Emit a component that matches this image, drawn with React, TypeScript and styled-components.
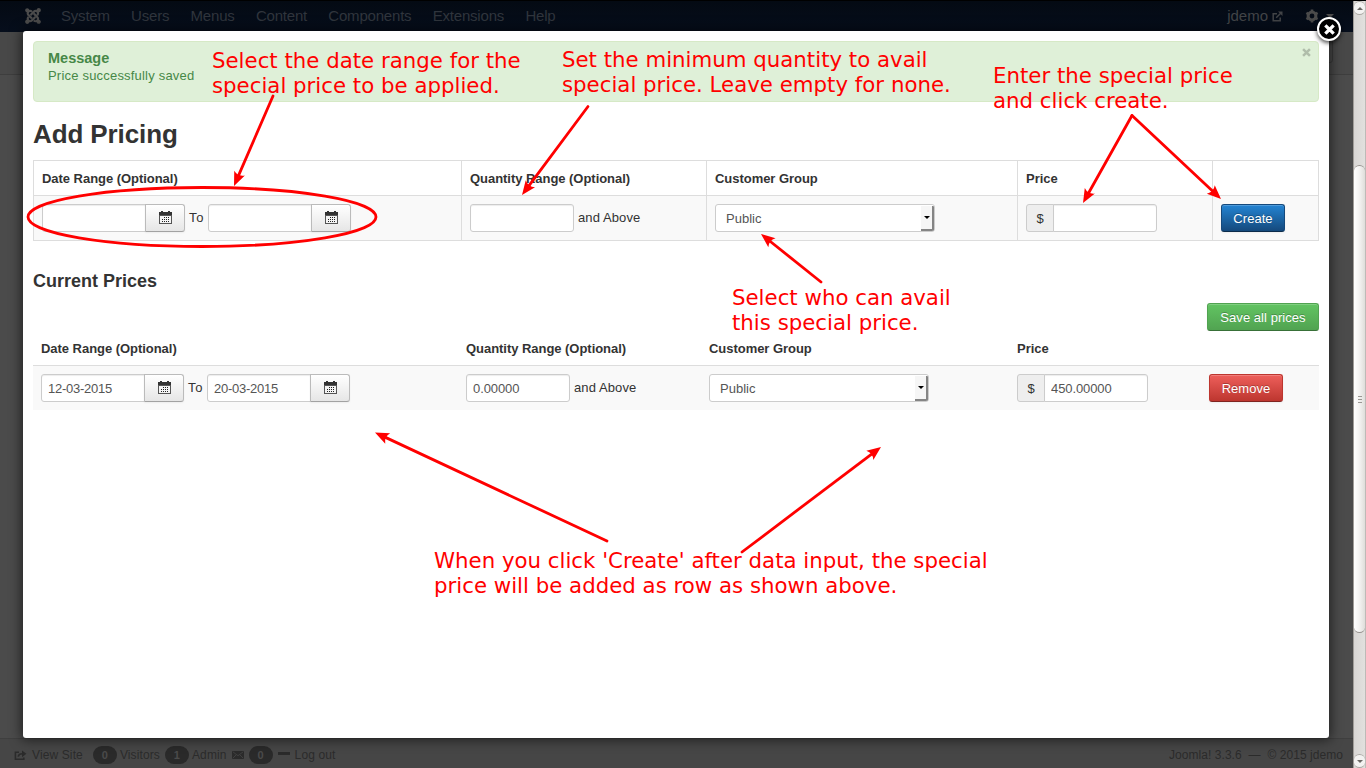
import React from "react";
import styled, { createGlobalStyle } from "styled-components";
import { FaJoomla } from "react-icons/fa";

const GlobalStyle = createGlobalStyle`
  *, *::before, *::after { box-sizing: border-box; }
  body {
    margin: 0;
    overflow: hidden;
    font: 13px/18px "Liberation Sans", Arial, sans-serif;
    color: #333;
  }
`;

const Screen = styled.div`
  position: relative;
  display: flex;
  width: 1366px;
  height: 768px;
  border-top: 1px solid #000;
  overflow: hidden;
`;

const Backdrop = styled.div`
  display: flex;
  flex-direction: column;
  width: 1353px;
  background: #4b4b4b;
`;

const Navbar = styled.nav`
  display: flex;
  align-items: center;
  height: 31px;
  padding: 0 19px 1px 24px;
  background: linear-gradient(#040a13, #060e1c);
  color: #30353d;
  font-size: 15px;
`;

const NavLogo = styled(FaJoomla)`
  width: 18px;
  height: 18px;
  margin-right: 19px;
  color: #4b4b4b;
`;

const NavItems = styled.div`
  display: flex;
  flex: 1;
  gap: 21.3px;
  letter-spacing: -0.2px;
`;

const NavUser = styled.div`
  display: flex;
  align-items: center;
  gap: 4px;
  color: #424447;
`;

const GearSlot = styled.span`
  display: flex;
  align-items: center;
  gap: 7px;
  margin-left: 18px;
`;

const Subhead = styled.div`
  display: flex;
  justify-content: flex-end;
  height: 43px;
  padding: 4px 20px 11px;
  background: #484848;
  border-bottom: 1px solid #3e3e3e;
`;

const SubheadButton = styled.span`
  width: 80px;
  border: 1px solid #393939;
  border-radius: 3px;
`;

const BackdropBody = styled.div`
  flex: 1;
`;

const StatusBar = styled.footer`
  display: flex;
  align-items: center;
  height: 30px;
  padding: 3px 10px 0 14px;
  border-top: 1px solid #3f3f3f;
  background: #464646;
  color: #2b2b2b;
  font-size: 12px;
  letter-spacing: 0.12px;
`;

const StatusText = styled.span<{ $before: number }>`
  margin-left: ${(p) => p.$before}px;
  white-space: pre;
`;

const StatusIcon = styled.span<{ $lift?: number }>`
  display: flex;
  margin: 0 0 ${(p) => p.$lift ?? 0}px 5px;
`;

const StatusBadge = styled.span<{ $before: number }>`
  width: 24px;
  height: 18px;
  margin-left: ${(p) => p.$before}px;
  border-radius: 9px;
  background: #2a2a2a;
  color: #4b4b4b;
  font-size: 11px;
  font-weight: bold;
  text-align: center;
`;

const Copyright = styled.span`
  margin-left: auto;
  letter-spacing: 0.06px;
  white-space: pre;
`;

const ScrollTrack = styled.aside`
  display: flex;
  flex-direction: column;
  width: 13px;
  background: linear-gradient(90deg, #d8d6d4, #e2e0de);
  border-left: 1px solid #a09d99;
  border-right: 1px solid #bdbab7;
`;

const ScrollEnd = styled.div`
  display: flex;
  align-items: center;
  justify-content: center;
  height: 14px;
  border: 1px solid #aaa7a3;
  border-width: 1px 0;
  border-radius: 6px;
  background: #f3f2f1;
`;

const ScrollSpace = styled.div<{ $size: number }>`
  height: ${(p) => p.$size}px;
`;

const ScrollThumb = styled.div`
  display: flex;
  flex-direction: column;
  align-items: center;
  justify-content: center;
  gap: 2px;
  height: 468px;
  border: 1px solid #96928e;
  border-width: 1px 0;
  border-radius: 6px;
  background: linear-gradient(90deg, #fff, #f5f4f3 45%, #dfddda);
`;

const Grip = styled.i`
  width: 4px;
  height: 1px;
  background: #9a9793;
`;

const Modal = styled.main`
  position: absolute;
  left: 23px;
  top: 30px;
  width: 1306px;
  height: 707px;
  padding: 10px;
  border-radius: 3px;
  background: #fff;
  box-shadow: 0 0 12px 2px rgba(0, 0, 0, 0.55);
`;

const CloseBadge = styled.button`
  position: absolute;
  left: 1317px;
  top: 16px;
  display: flex;
  align-items: center;
  justify-content: center;
  width: 24px;
  height: 24px;
  padding: 0;
  border: 2px solid #fff;
  border-radius: 50%;
  background: #000;
  box-shadow: 0 2px 4px rgba(0, 0, 0, 0.7);
`;

const Alert = styled.section`
  display: flex;
  justify-content: space-between;
  height: 61px;
  padding: 6px 7px 0 14px;
  border: 1px solid #d6e9c6;
  border-radius: 4px;
  background: #dff0d8;
  color: #468847;
`;

const AlertTitle = styled.h4`
  margin: 1px 0 0;
  font-size: 14.5px;
  line-height: 18px;
`;

const AlertText = styled.p`
  margin: 0;
  line-height: 18px;
  letter-spacing: 0.2px;
`;

const PageTitle = styled.h1`
  margin: 14px 0 8px;
  font-size: 26px;
  line-height: 36px;
  letter-spacing: -0.1px;
`;

const SectionTitle = styled.h3`
  margin: 22px 0 4px;
  font-size: 18px;
  line-height: 36px;
`;

const Grid = styled.div<{ $bordered?: boolean }>`
  display: grid;
  grid-template-columns: ${(p) => (p.$bordered ? "428px 245px 311px 195px 107px" : "425px 243px 308px 192px 118px")};
  border: ${(p) => (p.$bordered ? "solid #ddd" : "none")};
  border-width: 1px 0;
`;

const Cell = styled.div<{ $bordered?: boolean; $head?: boolean }>`
  display: flex;
  align-items: center;
  height: ${(p) => (p.$head ? 34 : 45)}px;
  padding: ${(p) => (p.$head ? "2px 8px 0" : "0 8px")};
  border: 0 solid #ddd;
  border-top-width: ${(p) => (p.$head ? 0 : 1)}px;
  border-left-width: ${(p) => (p.$bordered ? 1 : 0)}px;
  background: ${(p) => (p.$head ? "#fff" : "#f9f9f9")};
  font-weight: ${(p) => (p.$head ? "bold" : "normal")};
  letter-spacing: ${(p) => (p.$head ? "-0.04px" : "normal")};
  white-space: nowrap;
  &:nth-child(5n) {
    border-right-width: ${(p) => (p.$bordered ? 1 : 0)}px;
  }
`;

const TextField = styled.input<{ $join?: "left" | "right" }>`
  width: 104px;
  height: 28px;
  padding: 1px 6px 0;
  margin-left: ${(p) => (p.$join === "left" ? -1 : 0)}px;
  border: 1px solid #ccc;
  border-radius: ${(p) => (p.$join === "left" ? "0 3px 3px 0" : p.$join === "right" ? "3px 0 0 3px" : "3px")};
  background: #fff;
  box-shadow: inset 0 1px 1px rgba(0, 0, 0, 0.075);
  color: #555;
  font: inherit;
  letter-spacing: ${(p) => (p.$join === "right" ? -0.25 : -0.1)}px;
`;

const CalendarButton = styled.button`
  display: flex;
  align-items: center;
  justify-content: center;
  width: 40px;
  height: 28px;
  margin-left: -1px;
  padding: 0 0 1px 1px;
  border: 1px solid #bbb;
  border-bottom-color: #a2a2a2;
  border-radius: 0 3px 3px 0;
  background: linear-gradient(#fff, #e6e6e6);
  box-shadow: 0 1px 2px rgba(0, 0, 0, 0.05);
`;

const Label = styled.span`
  padding: 0 0 1px 4px;
  letter-spacing: 0.1px;
`;

const RangeLabel = styled(Label)`
  width: 23px;
  letter-spacing: 0.8px;
`;

const SelectBox = styled.div`
  display: flex;
  justify-content: space-between;
  width: 220px;
  height: 28px;
  padding: 1px 0 0 10px;
  border: 1px solid #ccc;
  border-radius: 3px;
  background: #fff;
  color: #555;
  line-height: 26px;
`;

const SelectArrow = styled.span`
  display: flex;
  align-items: center;
  justify-content: center;
  width: 13px;
  height: 25px;
  padding-left: 1px;
  border-right: 2px solid #858585;
  border-bottom: 2px solid #858585;
  border-radius: 0 1px 2px 0;
  background: #f6f6f6;
`;

const Prefix = styled.span`
  width: 28px;
  height: 28px;
  border: 1px solid #ccc;
  border-radius: 3px 0 0 3px;
  background: #eee;
  text-align: center;
  line-height: 27px;
`;

const buttonTones = {
  primary: ["#2384d3", "#15497c", "#15497c", "#0c2c4b"],
  success: ["#62c462", "#51a351", "#51a351", "#387038"],
  danger: ["#ee5f5b", "#bd362f", "#bd362f", "#802420"],
};

const Button = styled.button<{ $tone: keyof typeof buttonTones; $width: number }>`
  width: ${(p) => p.$width}px;
  height: 28px;
  padding: 1px 0 0;
  border: 1px solid ${(p) => buttonTones[p.$tone][2]};
  border-bottom-color: ${(p) => buttonTones[p.$tone][3]};
  border-radius: 3px;
  background: linear-gradient(${(p) => buttonTones[p.$tone][0]}, ${(p) => buttonTones[p.$tone][1]});
  box-shadow: inset 0 1px 0 rgba(255, 255, 255, 0.2), 0 1px 2px rgba(0, 0, 0, 0.05);
  color: #fff;
  font: inherit;
  letter-spacing: 0.05px;
  text-shadow: 0 -1px 0 rgba(0, 0, 0, 0.25);
`;

const Actions = styled.div`
  display: flex;
  justify-content: flex-end;
`;

const Drawing = styled.svg`
  position: absolute;
  left: 0;
  top: -1px;
  pointer-events: none;
`;

const Note = styled.p<{ $x: number; $y: number }>`
  position: absolute;
  left: ${(p) => p.$x}px;
  top: ${(p) => p.$y - 1}px;
  margin: 0;
  color: #f00;
  font: 21.3px/25px "DejaVu Sans", sans-serif;
  white-space: pre;
`;

const CalendarIcon = () => (
  <svg width="13" height="13" viewBox="0 0 13 13" shapeRendering="crispEdges">
    <path d="M0 1h2V0h2v1h5V0h2v1h2v3H0z" fill="#333" />
    <path d="M.5 4.500h12v8H.5z" fill="#f4f4f4" stroke="#555" />
    <path
      d="M5 6h1v1H5zm2 0h1v1H7zm2 0h1v1H9zM3 8h1v1H3zm2 0h1v1H5zm2 0h1v1H7zm2 0h1v1H9zM3 10h1v1H3zm2 0h1v1H5zm2 0h1v1H7zm2 0h1v1H9z"
      fill="#222"
    />
  </svg>
);

const ExternalIcon = () => (
  <svg width="11" height="11" viewBox="0 0 11 11" fill="none" stroke="#424447" strokeWidth="1.5">
    <path d="M5 2.7H1.2v7h7V6.5M4.2 6.8l5-5" />
    <path d="M6 .5h4.5V5z" fill="#424447" stroke="none" />
  </svg>
);

const GearIcon = () => (
  <svg width="14" height="14" viewBox="-7 -7 14 14" fill="none" stroke="#4b4b4b">
    <circle r="3.9" strokeWidth="3" />
    <path d="M0-6.500v2M0 4.500v2M-5.600-3.200l1.700 1M3.900 2.200l1.700 1M-5.600 3.200l1.700-1M3.900-2.200l1.700-1" strokeWidth="2.600" />
  </svg>
);

const ShareIcon = () => (
  <svg width="13" height="11" viewBox="0 0 13 11" fill="none" stroke="#2b2b2b" strokeWidth="1.6">
    <path d="M5 2.2H1.4v7h8.4V7.4M4.2 6.6c.4-2 1.8-2.8 4-2.8" />
    <path d="M8 .4 12.4 3.800 8 7.200z" fill="#2b2b2b" stroke="none" />
  </svg>
);

const MailIcon = () => (
  <svg width="12" height="8" viewBox="0 0 12 8">
    <path d="M0 0h12v8H0z" fill="#2b2b2b" />
    <path d="m.7.7 5.300 4 5.300-4M.7 7.300 4 4M11.300 7.300 8 4" fill="none" stroke="#464646" strokeWidth=".8" />
  </svg>
);

const Caret = ({ up, color, size = 5 }: { up?: boolean; color: string; size?: number }) => (
  <svg width={size} height={Math.ceil(size / 2)} viewBox="0 0 6 3" preserveAspectRatio="none">
    <path d={up ? "M0 3h6L3 0z" : "M0 0h6L3 3z"} fill={color} />
  </svg>
);

const Cross = ({ size, color, weight }: { size: number; color: string; weight: number }) => (
  <svg width={size} height={size} viewBox="0 0 10 10" stroke={color} strokeWidth={weight}>
    <path d="m1.200 1.200 7.600 7.600M8.800 1.200 1.200 8.800" />
  </svg>
);

const arrows = [
  [273, 96, 234, 186],
  [588, 106.5, 522, 195],
  [1132, 115.5, 1083, 203],
  [1132, 115.5, 1221, 199],
  [821, 282, 761, 234],
  [607, 541, 375, 432.5],
  [742, 552, 881, 447],
];

const Arrow = ({ points: [x1, y1, x2, y2] }: { points: number[] }) => {
  const length = Math.hypot(x2 - x1, y2 - y1);
  const angle = (Math.atan2(y2 - y1, x2 - x1) * 180) / Math.PI;
  return (
    <g transform={`translate(${x2} ${y2}) rotate(${angle})`}>
      <path d={`M${-length} 0H-8`} stroke="#f00" strokeWidth="2.800" strokeLinecap="round" />
      <path d="M0 0-14-5.800Q-10 0-14 5.800z" fill="#f00" />
    </g>
  );
};

const headings = ["Date Range (Optional)", "Quantity Range (Optional)", "Customer Group", "Price", ""];

type PriceTableProps = {
  bordered?: boolean;
  from?: string;
  to?: string;
  quantity?: string;
  price?: string;
  action: React.ReactNode;
};

const DateField = ({ value }: { value: string }) => (
  <>
    <TextField $join="right" defaultValue={value} />
    <CalendarButton>
      <CalendarIcon />
    </CalendarButton>
  </>
);

const PriceTable = ({ bordered, from = "", to = "", quantity = "", price = "", action }: PriceTableProps) => (
  <Grid $bordered={bordered}>
    {headings.map((text, i) => (
      <Cell key={i} $head $bordered={bordered}>
        {text}
      </Cell>
    ))}
    <Cell $bordered={bordered}>
      <DateField value={from} />
      <RangeLabel>To</RangeLabel>
      <DateField value={to} />
    </Cell>
    <Cell $bordered={bordered}>
      <TextField defaultValue={quantity} />
      <Label>and Above</Label>
    </Cell>
    <Cell $bordered={bordered}>
      <SelectBox>
        Public
        <SelectArrow>
          <Caret color="#000" size={6} />
        </SelectArrow>
      </SelectBox>
    </Cell>
    <Cell $bordered={bordered}>
      <Prefix>$</Prefix>
      <TextField $join="left" defaultValue={price} />
    </Cell>
    <Cell $bordered={bordered}>{action}</Cell>
  </Grid>
);

export default function App() {
  return (
    <Screen>
      <GlobalStyle />
      <Backdrop>
        <Navbar>
          <NavLogo />
          <NavItems>
            {["System", "Users", "Menus", "Content", "Components", "Extensions", "Help"].map((item) => (
              <span key={item}>{item}</span>
            ))}
          </NavItems>
          <NavUser>
            jdemo <ExternalIcon />
            <GearSlot>
              <GearIcon />
              <Caret color="#4b4b4b" size={8} />
            </GearSlot>
          </NavUser>
        </Navbar>
        <Subhead>
          <SubheadButton />
        </Subhead>
        <BackdropBody />
        <StatusBar>
          <ShareIcon />
          <StatusText $before={5}>View Site</StatusText>
          <StatusBadge $before={10}>0</StatusBadge>
          <StatusText $before={3}>Visitors</StatusText>
          <StatusBadge $before={5}>1</StatusBadge>
          <StatusText $before={3}>Admin</StatusText>
          <StatusIcon>
            <MailIcon />
          </StatusIcon>
          <StatusBadge $before={5}>0</StatusBadge>
          <StatusIcon $lift={3}>
            <svg width="12" height="3">
              <path d="M0 0h12v3H0z" fill="#2b2b2b" />
            </svg>
          </StatusIcon>
          <StatusText $before={5}>Log out</StatusText>
          <Copyright>{"Joomla! 3.3.6  —  © 2015 jdemo"}</Copyright>
        </StatusBar>
      </Backdrop>
      <ScrollTrack>
        <ScrollEnd>
          <Caret up color="#6b6865" size={6} />
        </ScrollEnd>
        <ScrollSpace $size={150} />
        <ScrollThumb>
          <Grip />
          <Grip />
          <Grip />
        </ScrollThumb>
        <ScrollSpace $size={121} />
        <ScrollEnd>
          <Caret color="#6b6865" size={6} />
        </ScrollEnd>
      </ScrollTrack>

      <Modal>
        <Alert>
          <div>
            <AlertTitle>Message</AlertTitle>
            <AlertText>Price successfully saved</AlertText>
          </div>
          <Cross size={9} color="#b0bdaa" weight={2.8} />
        </Alert>
        <PageTitle>Add Pricing</PageTitle>
        <PriceTable
          bordered
          action={
            <Button $tone="primary" $width={64}>
              Create
            </Button>
          }
        />
        <SectionTitle>Current Prices</SectionTitle>
        <Actions>
          <Button $tone="success" $width={112}>
            Save all prices
          </Button>
        </Actions>
        <PriceTable
          from="12-03-2015"
          to="20-03-2015"
          quantity="0.00000"
          price="450.00000"
          action={
            <Button $tone="danger" $width={74}>
              Remove
            </Button>
          }
        />
      </Modal>
      <CloseBadge>
        <Cross size={11} color="#fff" weight={3} />
      </CloseBadge>

      <Drawing width="1366" height="768" fill="none">
        <ellipse cx="202" cy="217" rx="174" ry="29.5" stroke="#f00" strokeWidth="2.8" />
        {arrows.map((points, i) => (
          <Arrow key={i} points={points} />
        ))}
      </Drawing>
      <Note $x={212} $y={48}>{"Select the date range for the\nspecial price to be applied."}</Note>
      <Note $x={562} $y={47}>{"Set the minimum quantity to avail\nspecial price. Leave empty for none."}</Note>
      <Note $x={993} $y={63}>{"Enter the special price\nand click create."}</Note>
      <Note $x={732} $y={285}>{"Select who can avail\nthis special price."}</Note>
      <Note $x={434} $y={548}>{"When you click 'Create' after data input, the special\nprice will be added as row as shown above."}</Note>
    </Screen>
  );
}
